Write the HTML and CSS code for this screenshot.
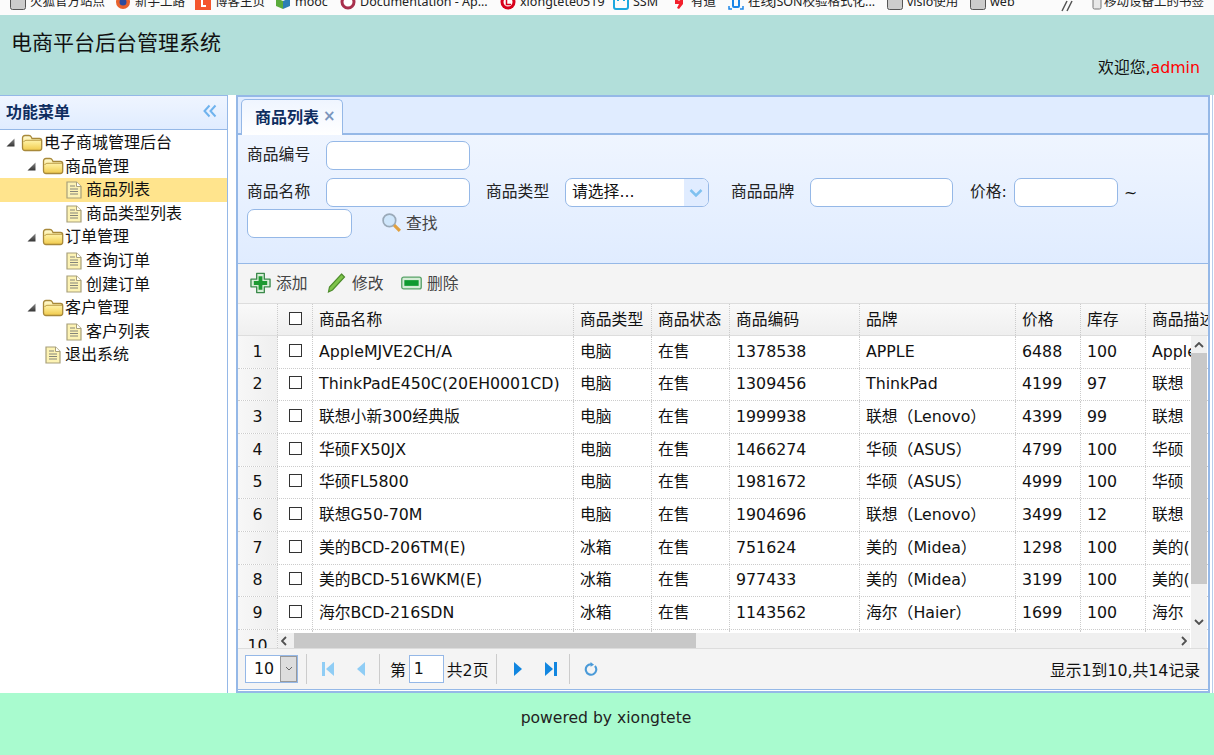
FILE: index.html
```html
<!DOCTYPE html>
<html lang="zh">
<head>
<meta charset="utf-8">
<title>电商平台后台管理系统</title>
<link rel="stylesheet" href="styles.css">
</head>
<body>
<svg class="defs" width="0" height="0" aria-hidden="true">
  <defs>
    <linearGradient id="fg" x1="0" y1="0" x2="0" y2="1"><stop offset="0" stop-color="#fffbd8"/><stop offset=".5" stop-color="#fce98f"/><stop offset="1" stop-color="#f0c94a"/></linearGradient>
    <linearGradient id="ag" x1="0" y1="0" x2="0" y2="1"><stop offset="0" stop-color="#888"/><stop offset="1" stop-color="#333"/></linearGradient>
    <symbol id="folder" viewBox="0 0 22 18"><path d="M1.500 14V4C1.500 2.500 2.500 1.500 4 1.500H8c1.200 0 1.800.6 2.300 1.500L11 4.500h7.500c1.500 0 2.200.8 2.200 2.200V14c0 1.500-.9 2.500-2.400 2.500H4C2.500 16.500 1.500 15.500 1.500 14z" fill="url(#fg)" stroke="#a8893a" stroke-width="1.300"/><path d="M2.500 8c1-1.500 2-1.700 3.500-1.700h14" fill="none" stroke="#bfa04a" stroke-width="1"/></symbol>
    <symbol id="file" viewBox="0 0 16 18"><path d="M1 1h9.500l4.500 4.500V17H1z" fill="#fdf3b4" stroke="#a8a07a" stroke-width="1.200"/><path d="M10.500 1v4.500H15" fill="#fff" stroke="#a8a07a" stroke-width="1"/><path d="M4 5h5M4 8h8M4 10.500h8M4 13h8" stroke="#85857a" stroke-width="1.100"/></symbol>
    <symbol id="arrow" viewBox="0 0 9 9"><path d="M8.500.5v8H.5z" fill="url(#ag)"/></symbol>
    <symbol id="grey" viewBox="0 0 16 16"><rect x=".5" y=".5" width="15" height="15" rx="2" fill="#ccc" stroke="#555"/></symbol>
  </defs>
</svg>

<nav class="bookmarks">
  <span class="bm w1"><svg class="bi"><use href="#grey"/></svg>火狐官方站点</span>
  <span class="bm w2"><svg class="bi" viewBox="0 0 16 16"><circle cx="8" cy="8" r="7" fill="#e8612c"/><circle cx="8" cy="8" r="3.500" fill="#2c4a9e"/></svg>新手上路</span>
  <span class="bm w3"><svg class="bi" viewBox="0 0 16 16"><rect width="16" height="16" fill="#f4552d"/><path d="M11 4H7v8h4" fill="none" stroke="#fff" stroke-width="2"/></svg>博客主页</span>
  <span class="bm w4"><svg class="bi" viewBox="0 0 16 16"><path d="M1 4l7 3v8l-7-3z" fill="#5bab3c"/><path d="M15 4L8 7v8l7-3z" fill="#2d7fb5"/></svg>mooc</span>
  <span class="bm w5"><svg class="bi" viewBox="0 0 16 16"><circle cx="8" cy="8" r="6" fill="#fff" stroke="#a8304d" stroke-width="3"/></svg>Documentation - Ap...</span>
  <span class="bm w6"><svg class="bi" viewBox="0 0 16 16"><circle cx="8" cy="8" r="7.500" fill="#d8001b"/><circle cx="8" cy="8" r="4.500" fill="#fff"/><path d="M6.500 5v5.500H11" fill="none" stroke="#d8001b" stroke-width="1.500"/></svg>xiongtete0519</span>
  <span class="bm w7"><svg class="bi" viewBox="0 0 16 16"><rect x="1" y="1" width="14" height="14" rx="2" fill="none" stroke="#1ba8e0" stroke-width="2"/><path d="M5 5v2M11 5v2" stroke="#1ba8e0" stroke-width="2"/></svg>SSM</span>
  <span class="bm w8"><svg class="bi" viewBox="0 0 16 16"><path d="M4 1h8v9l-4 5-2-1 2-4H4z" fill="#f3202c"/><circle cx="8" cy="5" r="1.500" fill="#fff"/></svg>有道</span>
  <span class="bm w9"><svg class="bi" viewBox="0 0 16 16"><path d="M1 4V1h3M12 1h3v3M15 12v3h-3M4 15H1v-3" fill="none" stroke="#1c86e8" stroke-width="1.500"/><rect x="5" y="3" width="6" height="10" rx="1" fill="none" stroke="#1c86e8" stroke-width="2"/></svg>在线JSON校验格式化...</span>
  <span class="bm w10"><svg class="bi"><use href="#grey"/></svg>visio使用</span>
  <span class="bm w11"><svg class="bi"><use href="#grey"/></svg>web</span>
  <svg class="bm-more" viewBox="0 0 12 12"><path d="M1 11l5-10M6 11l5-10" fill="none" stroke="#555" stroke-width="1.500"/></svg>
  <span class="bm w12"><svg class="bi bi-phone" viewBox="0 0 10 16"><rect x="1" y="0" width="8" height="15" rx="1.500" fill="#e8e8e8" stroke="#777"/></svg>移动设备上的书签</span>
</nav>

<header class="topbar">
  <h1 class="brand">电商平台后台管理系统</h1>
  <p class="welcome">欢迎您,<span class="user">admin</span></p>
</header>

<main class="workspace">
  <aside class="sidebar">
    <div class="side-head"><span>功能菜单</span>
      <svg class="collapse" viewBox="0 0 14 14"><path d="M6.500 1.500L1.500 7l5 5.500M12.500 1.500L7.500 7l5 5.500" fill="none" stroke="#6fb3ee" stroke-width="2"/></svg>
    </div>
    <ul class="tree">
      <li class="node l0"><svg class="tw"><use href="#arrow"/></svg><svg class="folder"><use href="#folder"/></svg>电子商城管理后台</li>
      <li class="node l1"><svg class="tw"><use href="#arrow"/></svg><svg class="folder"><use href="#folder"/></svg>商品管理</li>
      <li class="node l2 selected"><svg class="file"><use href="#file"/></svg>商品列表</li>
      <li class="node l2"><svg class="file"><use href="#file"/></svg>商品类型列表</li>
      <li class="node l1"><svg class="tw"><use href="#arrow"/></svg><svg class="folder"><use href="#folder"/></svg>订单管理</li>
      <li class="node l2"><svg class="file"><use href="#file"/></svg>查询订单</li>
      <li class="node l2"><svg class="file"><use href="#file"/></svg>创建订单</li>
      <li class="node l1"><svg class="tw"><use href="#arrow"/></svg><svg class="folder"><use href="#folder"/></svg>客户管理</li>
      <li class="node l2"><svg class="file"><use href="#file"/></svg>客户列表</li>
      <li class="node l3"><svg class="file"><use href="#file"/></svg>退出系统</li>
    </ul>
  </aside>

  <section class="content">
    <div class="tabs">
      <div class="tab"><span>商品列表</span><span class="tab-x">×</span></div>
    </div>
    <div class="tab-body">
      <form class="filter">
        <div class="f-row"><label class="lbl">商品编号</label><span class="inp w144"></span></div>
        <div class="f-row">
          <label class="lbl">商品名称</label><span class="inp w144"></span>
          <label class="lbl lbl-2">商品类型</label>
          <span class="inp w144 combo"><span class="combo-text">请选择...</span><span class="combo-btn"><svg viewBox="0 0 14 10" width="14" height="10"><path d="M1.500 2L7 7.500 12.500 2" fill="none" stroke="#7fc1f0" stroke-width="2.500"/></svg></span></span>
          <label class="lbl lbl-3">商品品牌</label><span class="inp w143"></span>
          <label class="lbl lbl-4">价格:</label><span class="inp w104"></span><span class="tilde">~</span>
        </div>
        <div class="f-row f-row3">
          <span class="inp w105"></span>
          <span class="search"><svg class="sicon" viewBox="0 0 20 20"><circle cx="8" cy="8" r="6" fill="#cfe6fb" stroke="#9aa9b8" stroke-width="1.600"/><path d="M12.500 12.500L18 18" stroke="#e0a040" stroke-width="3"/></svg>查找</span>
        </div>
      </form>
      <div class="toolbar">
        <span class="tool t-add"><svg class="ticon" viewBox="0 0 22 22"><path d="M7 1h8v6h6v8h-6v6H7v-6H1V7h6z" fill="#d8eed8" stroke="#3c8a4c" stroke-width="1.400" stroke-linejoin="round"/><path d="M9 4h4v5h5v4h-5v5H9v-5H4V9h5z" fill="#1e9a32"/></svg>添加</span>
        <span class="tool t-edit"><svg class="ticon" viewBox="0 0 20 22"><path d="M15 2l3 3L6 18l-4 2 1-5z" fill="#7ec44a" stroke="#4d8c2c" stroke-width="1.200"/></svg>修改</span>
        <span class="tool t-del"><svg class="ticon wide" viewBox="0 0 22 14"><rect x=".8" y=".8" width="20.400" height="12.400" rx="2" fill="#d4ecd6" stroke="#58a268" stroke-width="1.400"/><rect x="3.500" y="4" width="15" height="6" fill="#0f9a30"/></svg>删除</span>
      </div>
      <div class="datagrid">
        <div class="g-row g-head">
          <div class="c c-num"></div><div class="c c-chk"><i class="box"></i></div>
          <div class="c">商品名称</div><div class="c">商品类型</div><div class="c">商品状态</div><div class="c">商品编码</div><div class="c">品牌</div><div class="c">价格</div><div class="c">库存</div><div class="c">商品描述</div>
        </div>
        <div class="g-row"><div class="c c-num">1</div><div class="c c-chk"><i class="box"></i></div><div class="c">AppleMJVE2CH/A</div><div class="c">电脑</div><div class="c">在售</div><div class="c">1378538</div><div class="c">APPLE</div><div class="c">6488</div><div class="c">100</div><div class="c">Apple</div></div>
        <div class="g-row"><div class="c c-num">2</div><div class="c c-chk"><i class="box"></i></div><div class="c">ThinkPadE450C(20EH0001CD)</div><div class="c">电脑</div><div class="c">在售</div><div class="c">1309456</div><div class="c">ThinkPad</div><div class="c">4199</div><div class="c">97</div><div class="c">联想</div></div>
        <div class="g-row"><div class="c c-num">3</div><div class="c c-chk"><i class="box"></i></div><div class="c">联想小新300经典版</div><div class="c">电脑</div><div class="c">在售</div><div class="c">1999938</div><div class="c">联想（Lenovo）</div><div class="c">4399</div><div class="c">99</div><div class="c">联想</div></div>
        <div class="g-row"><div class="c c-num">4</div><div class="c c-chk"><i class="box"></i></div><div class="c">华硕FX50JX</div><div class="c">电脑</div><div class="c">在售</div><div class="c">1466274</div><div class="c">华硕（ASUS）</div><div class="c">4799</div><div class="c">100</div><div class="c">华硕</div></div>
        <div class="g-row"><div class="c c-num">5</div><div class="c c-chk"><i class="box"></i></div><div class="c">华硕FL5800</div><div class="c">电脑</div><div class="c">在售</div><div class="c">1981672</div><div class="c">华硕（ASUS）</div><div class="c">4999</div><div class="c">100</div><div class="c">华硕</div></div>
        <div class="g-row"><div class="c c-num">6</div><div class="c c-chk"><i class="box"></i></div><div class="c">联想G50-70M</div><div class="c">电脑</div><div class="c">在售</div><div class="c">1904696</div><div class="c">联想（Lenovo）</div><div class="c">3499</div><div class="c">12</div><div class="c">联想</div></div>
        <div class="g-row"><div class="c c-num">7</div><div class="c c-chk"><i class="box"></i></div><div class="c">美的BCD-206TM(E)</div><div class="c">冰箱</div><div class="c">在售</div><div class="c">751624</div><div class="c">美的（Midea）</div><div class="c">1298</div><div class="c">100</div><div class="c">美的(</div></div>
        <div class="g-row"><div class="c c-num">8</div><div class="c c-chk"><i class="box"></i></div><div class="c">美的BCD-516WKM(E)</div><div class="c">冰箱</div><div class="c">在售</div><div class="c">977433</div><div class="c">美的（Midea）</div><div class="c">3199</div><div class="c">100</div><div class="c">美的(</div></div>
        <div class="g-row"><div class="c c-num">9</div><div class="c c-chk"><i class="box"></i></div><div class="c">海尔BCD-216SDN</div><div class="c">冰箱</div><div class="c">在售</div><div class="c">1143562</div><div class="c">海尔（Haier）</div><div class="c">1699</div><div class="c">100</div><div class="c">海尔</div></div>
        <div class="g-row"><div class="c c-num">10</div><div class="c c-chk"><i class="box"></i></div><div class="c"></div><div class="c"></div><div class="c"></div><div class="c"></div><div class="c"></div><div class="c"></div><div class="c"></div><div class="c"></div></div>

        <div class="vscroll">
          <svg class="sb-arrow up" viewBox="0 0 10 6"><path d="M1 5l4-4 4 4" fill="none" stroke="#505050" stroke-width="1.800"/></svg>
          <div class="vthumb"></div>
          <svg class="sb-arrow down" viewBox="0 0 10 6"><path d="M1 1l4 4 4-4" fill="none" stroke="#505050" stroke-width="1.800"/></svg>
        </div>
        <div class="hscroll">
          <svg class="sb-arrow-h" viewBox="0 0 6 10"><path d="M5 1L1 5l4 4" fill="none" stroke="#505050" stroke-width="1.800"/></svg>
          <div class="hthumb"></div>
          <svg class="sb-arrow-h" viewBox="0 0 6 10"><path d="M1 1l4 4-4 4" fill="none" stroke="#505050" stroke-width="1.800"/></svg>
        </div>
      </div>
      <div class="pager">
        <span class="psize"><span class="psize-v">10</span><span class="psize-b"><svg viewBox="0 0 8 6" width="8" height="6"><path d="M1 1l3 3 3-3" fill="none" stroke="#666" stroke-width="1"/></svg></span></span>
        <i class="sep s1"></i>
        <svg class="pi dim first" viewBox="0 0 14 14"><rect x="1" y="0" width="3" height="14" fill="#8fcdf5"/><path d="M13 0v14L5 7z" fill="#8fcdf5"/></svg>
        <svg class="pi dim prev" viewBox="0 0 14 14"><path d="M11 0v14L3 7z" fill="#8fcdf5"/></svg>
        <i class="sep s2"></i>
        <span class="ptxt">第</span><span class="pnum">1</span><span class="ptxt">共2页</span>
        <i class="sep s3"></i>
        <svg class="pi next" viewBox="0 0 14 14"><path d="M3 0v14l8-7z" fill="#1186e0"/></svg>
        <svg class="pi last" viewBox="0 0 14 14"><path d="M1 0v14l8-7z" fill="#1186e0"/><rect x="10" y="0" width="3" height="14" fill="#1186e0"/></svg>
        <i class="sep s4"></i>
        <svg class="pi reload" viewBox="0 0 16 16"><path d="M12.500 4.500A6 6 0 1 1 8 2.500" fill="none" stroke="#4a9ad8" stroke-width="2.400"/><path d="M7.500 0v5.500L11.500 3z" fill="#4a9ad8"/></svg>
        <span class="pinfo">显示1到10,共14记录</span>
      </div>
    </div>
  </section>
</main>

<footer class="foot">powered by xiongtete</footer>
</body>
</html>
```
FILE: styles.css
```css
* { box-sizing: border-box; }
html, body { margin: 0; padding: 0; height: 755px; overflow: hidden; }
body { font-family: "DejaVu Sans", "Noto Sans CJK SC", sans-serif; font-size: 15.8px; color: #111; background: #fff; width: 1214px; }
.defs { position: absolute; }

.bookmarks { height: 15px; overflow: hidden; background: #fbfbfb; display: flex; align-items: flex-end; font-family: "Noto Sans", "Noto Sans CJK SC", sans-serif; font-size: 12.5px; color: #222; padding-left: 10px; white-space: nowrap; }
.bm { display: flex; align-items: center; height: 20px; line-height: 20px; gap: 4px; flex: none; margin-bottom: 3px; }
.bi { width: 16px; height: 16px; flex: none; }
.bi-phone { width: 10px; }
.w1 { width: 105px; } .w2 { width: 80px; } .w3 { width: 80px; } .w4 { width: 65px; } .w5 { width: 160px; } .w6 { width: 113px; } .w7 { width: 58px; } .w8 { width: 57px; } .w9 { width: 159px; } .w10 { width: 83px; } .w11 { width: 52px; } .w12 { margin-left: 19px; gap: 2px; }
.bm-more { width: 12px; height: 12px; flex: none; margin-left: 39px; margin-bottom: 3px; }

.topbar { height: 80px; background: #b2dfda; padding: 14px 14px 0 11px; display: flex; flex-direction: column; }
.brand { margin: 0; font-size: 21px; font-weight: 400; line-height: 28px; color: #111; }
.welcome { margin: -1px 0 0; text-align: right; font-size: 15.8px; line-height: 24px; }
.user { color: #f00; }

.workspace { height: 598px; display: flex; background: #fff; }
.sidebar { width: 228px; flex: none; border-right: 1px solid #95b8e7; display: flex; flex-direction: column; }
.side-head { height: 35px; flex: none; padding: 0 5px 3px 6px; display: flex; align-items: center; justify-content: space-between; font-size: 16px; font-weight: 700; color: #0e2d5f; background: linear-gradient(#eff5ff, #e0ecff); border-bottom: 1px solid #95b8e7; border-top: 1px solid #95b8e7; }
.collapse { width: 14px; height: 14px; margin-right: 5px; }
.tree { list-style: none; margin: 1px 0 0; padding: 0; font-size: 16px; }
.node { height: 23.6px; line-height: 23.6px; display: flex; align-items: center; white-space: nowrap; color: #111; }
.selected { background: #ffe48d; }
.l0 { padding-left: 6px; } .l1 { padding-left: 27px; } .l2 { padding-left: 66px; } .l3 { padding-left: 45px; }
.tw { width: 9px; height: 9px; flex: none; margin-right: 6px; }
.folder { width: 22px; height: 18px; flex: none; }
.file { width: 16px; height: 18px; flex: none; margin-right: 4px; }
.l0 .folder, .l1 .folder { margin-right: 1px; }

.content { flex: 1; margin: 0 4px 0 8px; border-top: 2px solid #95b8e7; border-left: 2px solid #95b8e7; border-right: 2px solid #95b8e7; border-bottom: 1px solid #95b8e7; box-shadow: 2px 0 0 #fff, 3px 0 0 #b8cdea; display: flex; flex-direction: column; min-width: 0; }
.tabs { height: 38px; flex: none; background: #e0ecff; padding: 2px 0 0 3px; border-bottom: 2px solid #95b8e7; }
.tab { width: 102px; height: 36px; background: linear-gradient(#eff5ff, #fff); border: 1px solid #95b8e7; border-bottom: 0; border-radius: 5px 5px 0 0; display: flex; align-items: center; padding: 0 0 3px 13px; font-size: 16px; font-weight: 700; color: #0e2d5f; }
.tab-x { font-weight: 700; color: #7b95bd; margin-left: 4px; font-size: 15px; }
.tab-body { flex: 1; display: flex; flex-direction: column; min-height: 0; border-bottom: 3px double #95b8e7; }

.filter { height: 129px; flex: none; padding: 6px 0 0 9px; background: linear-gradient(#eff5ff, #e0ecff); border-bottom: 1px solid #95b8e7; display: flex; flex-direction: column; }
.f-row { display: flex; align-items: center; height: 29px; margin-bottom: 8px; }
.f-row3 { margin-top: -6px; }
.lbl { width: 79px; flex: none; color: #222; position: relative; top: -2px; }
.lbl-2 { margin-left: 16px; } .lbl-3 { margin-left: 22px; } .lbl-4 { margin-left: 17px; width: 44px; }
.inp { display: block; height: 29px; background: #fff; border: 1px solid #95b8e7; border-radius: 7px; flex: none; }
.w144 { width: 144px; } .w143 { width: 143px; } .w104 { width: 104px; } .w105 { width: 105px; }
.combo { display: flex; overflow: hidden; }
.combo-text { flex: 1; padding-left: 6px; line-height: 26px; color: #111; }
.combo-btn { width: 24px; background: #e0ecff; display: flex; align-items: center; justify-content: center; }
.tilde { margin-left: 6px; }
.search { display: flex; align-items: center; margin-left: 29px; color: #444; gap: 4px; margin-top: -2px; }
.sicon { width: 21px; height: 21px; }

.toolbar { height: 40px; flex: none; background: #f4f4f4; display: flex; align-items: center; color: #444; border-bottom: 1px solid #ddd; padding: 0 0 2px 12px; }
.tool { display: flex; align-items: center; gap: 5px; }
.ticon { width: 21px; height: 22px; flex: none; }
.ticon.wide { height: 14px; }
.t-add { width: 76px; } .t-edit { width: 75px; }

.datagrid { position: relative; height: 344px; overflow: hidden; flex: none; background: #fff; }
.g-row { display: grid; grid-template-columns: 40px 35px 261px 78px 78px 130px 156px 65px 65px 100px; height: 32.67px; border-bottom: 1px dotted #ccc; }
.g-head { height: 32px; background: linear-gradient(#f9f9f9, #efefef); border-bottom: 1px solid #ddd; }
.c { padding-left: 6px; border-right: 1px dotted #ccc; display: flex; align-items: center; white-space: nowrap; overflow: hidden; line-height: 24px; }
.c-num { justify-content: center; padding-left: 0; background: linear-gradient(to right, #f7f7f7, #efefef); }
.g-head .c-num { background: none; }
.c-chk { justify-content: center; padding: 0; }
.box { width: 13px; height: 13px; border: 1px solid #333; background: #fff; display: block; margin-top: -3px; }

.vscroll { position: absolute; right: 1px; top: 32px; width: 16px; bottom: 0; background: #f0f0f0; display: flex; flex-direction: column; align-items: center; padding-top: 6px; }
.sb-arrow { width: 10px; height: 6px; flex: none; }
.vthumb { width: 16px; height: 231px; background: #c8c8c8; margin-top: 5px; }
.sb-arrow.down { margin-top: auto; margin-bottom: 23px; }
.hscroll { position: absolute; left: 40px; right: 18px; bottom: 0; height: 15px; background: #f0f0f0; display: flex; align-items: center; padding: 0 3px; }
.sb-arrow-h { width: 6px; height: 10px; flex: none; }
.hthumb { width: 402px; height: 15px; background: #c8c8c8; margin: 0 auto 0 7px; }

.pager { flex: 1; min-height: 0; background: #f4f4f4; border-top: 1px solid #ddd; display: flex; align-items: center; padding-left: 7px; position: relative; }
.psize { display: flex; width: 53px; height: 28px; border: 1px solid #95b8e7; background: #fff; flex: none; }
.psize-v { flex: 1; padding-left: 8px; line-height: 26px; }
.psize-b { width: 17px; background: #ddd; border: 1px solid #999; display: flex; align-items: center; justify-content: center; }
.sep { width: 1px; height: 30px; background: #ccc; flex: none; }
.s1 { margin-left: 8px; } .s2 { margin-left: 11px; } .s3 { margin-left: 8px; } .s4 { margin-left: 11px; }
.pi { width: 14px; height: 14px; flex: none; }
.first { margin-left: 14px; } .prev { margin-left: 19px; }
.next { margin-left: 14px; } .last { margin-left: 19px; }
.reload { width: 14px; height: 14px; margin-left: 14px; }
.ptxt { margin-left: 10px; }
.pnum { width: 35px; height: 28px; border: 1px solid #95b8e7; background: #fff; padding-left: 4px; line-height: 26px; margin-left: 3px; }
.pnum + .ptxt { margin-left: 3px; }
.pinfo { margin-left: auto; margin-right: 8px; }

.foot { height: 62px; background: #a9fbcf; text-align: center; line-height: 50px; font-size: 15.6px; color: #222; padding-right: 2px; }
```
